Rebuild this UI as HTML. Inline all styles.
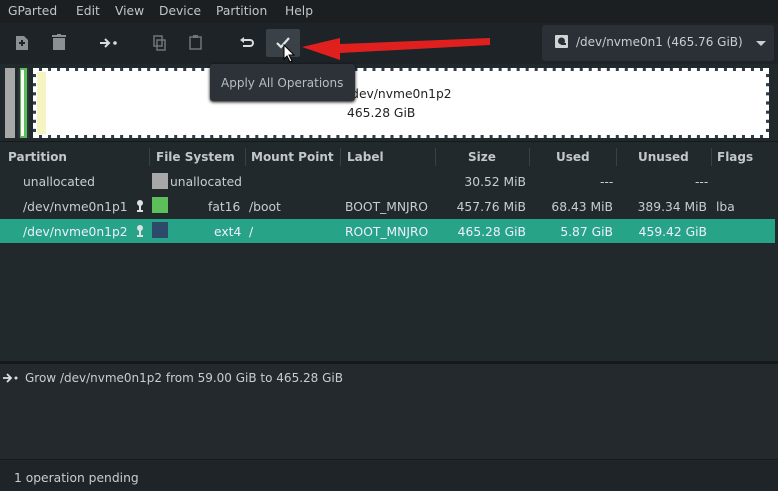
<!DOCTYPE html>
<html><head><meta charset="utf-8"><style>
*{margin:0;padding:0;box-sizing:border-box}
body{width:778px;height:491px;overflow:hidden;background:#22292d;font-family:"DejaVu Sans","Liberation Sans",sans-serif;font-size:12.3px;color:#c8cdd0;position:relative}
.abs{position:absolute}
.menu{top:0;left:0;width:778px;height:23px;background:#1b1f22;color:#c2c6c9}
.menu span{position:absolute;top:4px}
.tb{top:23px;left:0;width:778px;height:41px;background:#1e2327}
.th{font-weight:bold;color:#c3c7ca;top:150px;position:absolute;font-size:12px}
.sep{position:absolute;top:148px;width:1px;height:18px;background:#3a4145}
.r{position:absolute;white-space:nowrap}
</style></head><body>
<div class="abs menu">
<span style="left:8px">GParted</span><span style="left:76px">Edit</span><span style="left:115px">View</span><span style="left:159px">Device</span><span style="left:216px">Partition</span><span style="left:285px">Help</span>
</div>
<div class="abs tb">
<svg class="abs" style="left:16px;top:13px" width="12" height="14"><path d="M0 0h8l4 4v10H0z" fill="#8a9094"/><path d="M6 4v6M3 7h6" stroke="#1e2327" stroke-width="2"/></svg>
<svg class="abs" style="left:52px;top:11px" width="14" height="16"><rect x="0" y="1" width="14" height="2" fill="#8a9094"/><rect x="5" y="0" width="4" height="2" fill="#8a9094"/><rect x="1" y="4" width="12" height="12" fill="#8a9094"/></svg>
<svg class="abs" style="left:100px;top:14px" width="20" height="12"><path d="M0 6h9M5 2l4 4-4 4" stroke="#d8dcde" stroke-width="2" fill="none"/><circle cx="15" cy="6" r="1.8" fill="#d8dcde"/></svg>
<svg class="abs" style="left:153px;top:12px" width="13" height="16"><rect x="1" y="1" width="8" height="10" fill="none" stroke="#6f7579" stroke-width="1.5"/><rect x="4" y="5" width="8" height="10" fill="none" stroke="#6f7579" stroke-width="1.5"/></svg>
<svg class="abs" style="left:189px;top:12px" width="13" height="15"><rect x="1" y="2" width="11" height="12" fill="none" stroke="#6f7579" stroke-width="1.5"/><rect x="4" y="0" width="5" height="3" fill="#6f7579"/></svg>
<svg class="abs" style="left:240px;top:14px" width="14" height="12"><path d="M3 3h7a3 3 0 0 1 0 6H3" stroke="#d8dcde" stroke-width="2" fill="none"/><path d="M0 3l4-3v6z" fill="#d8dcde"/></svg>
<div class="abs" style="left:266px;top:6px;width:34px;height:28px;background:#3a4247;border-radius:2px"></div>
<svg class="abs" style="left:276px;top:14px" width="14" height="12"><path d="M1 6l4 4 8-9" stroke="#e4e7e8" stroke-width="2.2" fill="none"/></svg>
<svg class="abs" style="left:283px;top:21px" width="14" height="20"><path d="M1 1v14l3-3 3 6 2-1-3-6h5z" fill="#fff" stroke="#000" stroke-width="1"/></svg>
<svg class="abs" style="left:300px;top:4px" width="192" height="34"><path d="M190 11L40 17l0-6L2 20l38 13 0-7L190 18z" fill="#e0201e"/></svg>
<div class="abs" style="left:542px;top:2px;width:232px;height:36px;background:#2a3035;border-radius:3px"></div>
<svg class="abs" style="left:555px;top:12px" width="13" height="13"><rect width="13" height="13" rx="1" fill="#d0d4d6"/><circle cx="6.5" cy="6" r="3.5" fill="#2a3035"/><rect x="6" y="8" width="5" height="2" fill="#2a3035"/></svg>
<div class="r" style="left:576px;top:12px;color:#c8cdd0;font-size:12px">/dev/nvme0n1 (465.76 GiB)</div>
<svg class="abs" style="left:756px;top:18px" width="10" height="6"><path d="M0 0h10L5 5z" fill="#c8cdd0"/></svg>
</div>
<!-- partition bar -->
<div class="abs" style="left:5px;top:68px;width:10px;height:70px;background:#a8a8a8"></div>
<div class="abs" style="left:18px;top:68px;width:11px;height:70px;background:#5cbf5c;border:2px solid #2e3438;border-width:0 2px"></div>
<div class="abs" style="left:21px;top:70px;width:3px;height:66px;background:#fff"></div>
<div class="abs" style="left:33px;top:68px;width:736px;height:70px;border:3px dashed #fff;background:#2e3e4e"></div>
<div class="abs" style="left:36px;top:71px;width:730px;height:64px;background:#fff"></div>
<div class="abs" style="left:37px;top:72px;width:9px;height:62px;background:#f6f4c0"></div>
<div class="r" style="left:347px;top:87px;color:#222">/dev/nvme0n1p2</div>
<div class="r" style="left:347px;top:106px;color:#222">465.28 GiB</div>
<div class="abs" style="left:0;top:141px;width:778px;height:1px;background:#15191c"></div>
<!-- header -->
<div class="th" style="left:8px">Partition</div>
<div class="sep" style="left:149px"></div><div class="th" style="left:156px">File System</div>
<div class="sep" style="left:245px"></div><div class="th" style="left:251px">Mount Point</div>
<div class="sep" style="left:340px"></div><div class="th" style="left:347px">Label</div>
<div class="sep" style="left:435px"></div><div class="th" style="left:468px">Size</div>
<div class="sep" style="left:529px"></div><div class="th" style="left:556px">Used</div>
<div class="sep" style="left:616px"></div><div class="th" style="left:638px">Unused</div>
<div class="sep" style="left:711px"></div><div class="th" style="left:717px">Flags</div>
<!-- rows -->
<div class="abs" style="left:0;top:219px;width:775px;height:24px;background:#27a487"></div>
<div class="r" style="left:23px;top:175px">unallocated</div>
<div class="abs" style="left:152px;top:173px;width:16px;height:16px;background:#a8a8a8"></div>
<div class="r" style="left:170px;top:175px">unallocated</div>
<div class="r" style="right:252px;top:175px">30.52 MiB</div>
<div class="r" style="left:600px;top:175px">---</div>
<div class="r" style="left:695px;top:175px">---</div>
<div class="r" style="left:23px;top:200px">/dev/nvme0n1p1</div>
<div class="abs" style="left:152px;top:197px;width:16px;height:16px;background:#5cbf5c"></div>
<div class="r" style="left:208px;top:200px">fat16</div><div class="r" style="left:249px;top:200px">/boot</div>
<div class="r" style="left:345px;top:200px">BOOT_MNJRO</div>
<div class="r" style="right:252px;top:200px">457.76 MiB</div>
<div class="r" style="right:165px;top:200px">68.43 MiB</div>
<div class="r" style="right:71px;top:200px">389.34 MiB</div>
<div class="r" style="left:716px;top:200px">lba</div>
<div class="r" style="left:23px;top:225px;color:#eef">/dev/nvme0n1p2</div>
<div class="abs" style="left:152px;top:222px;width:16px;height:16px;background:#2d4a6a"></div>
<div class="r" style="left:214px;top:225px;color:#eef">ext4</div><div class="r" style="left:249px;top:225px;color:#eef">/</div>
<div class="r" style="left:345px;top:225px;color:#eef">ROOT_MNJRO</div>
<div class="r" style="right:252px;top:225px;color:#eef">465.28 GiB</div>
<div class="r" style="right:165px;top:225px;color:#eef">5.87 GiB</div>
<div class="r" style="right:71px;top:225px;color:#eef">459.42 GiB</div>
<svg class="abs" style="left:136px;top:200px" width="8" height="12"><circle cx="4" cy="3" r="3" fill="#e0e0e0"/><rect x="3" y="4" width="2" height="7" fill="#e0e0e0"/><rect x="1" y="10" width="6" height="2" fill="#e0e0e0"/></svg>
<svg class="abs" style="left:136px;top:225px" width="8" height="12"><circle cx="4" cy="3" r="3" fill="#e0e0e0"/><rect x="3" y="4" width="2" height="7" fill="#e0e0e0"/><rect x="1" y="10" width="6" height="2" fill="#e0e0e0"/></svg>
<!-- log -->
<div class="abs" style="left:0;top:361px;width:778px;height:3px;background:#15191c"></div>
<div class="abs" style="left:0;top:364px;width:778px;height:96px;background:#23292d;border-bottom:1px solid #15191c"></div>
<svg class="abs" style="left:3px;top:373px" width="18" height="10"><path d="M0 5h8M4 1l4 4-4 4" stroke="#e0e0e0" stroke-width="1.8" fill="none"/><circle cx="13" cy="5" r="1.5" fill="#e0e0e0"/></svg>
<div class="r" style="left:25px;top:371px;font-size:12px">Grow /dev/nvme0n1p2 from 59.00 GiB to 465.28 GiB</div>
<div class="abs" style="left:0;top:461px;width:778px;height:30px;background:#1f2428"></div>
<div class="r" style="left:14px;top:471px">1 operation pending</div>
<!-- tooltip -->
<div class="abs" style="left:210px;top:64px;width:145px;height:37px;background:#2c3237;border-radius:3px;box-shadow:0 1px 3px #000"></div>
<div class="r" style="left:221px;top:76px;color:#b8bec2;font-size:12px">Apply All Operations</div>
</body></html>
